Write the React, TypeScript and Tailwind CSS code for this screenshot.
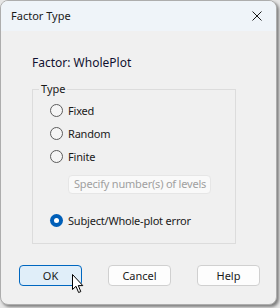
import React from 'react';

const font = { fontFamily: '"Segoe UI", "Noto Sans", sans-serif' };

function Radio({ label, checked = false }: { label: string; checked?: boolean }) {
  return (
    <div className="flex h-[23px] items-center gap-[5px] pl-[17px]">
      {checked ? (
        <span className="flex h-[13px] w-[13px] items-center justify-center rounded-full bg-[#005fb8]">
          <span className="h-[5px] w-[5px] rounded-full bg-white" />
        </span>
      ) : (
        <span className="h-[13px] w-[13px] rounded-full border border-[#5c5c5c] bg-[#f5f5f5]" />
      )}
      <span className="text-[11px] leading-[16px] tracking-[-0.2px] text-[#1a1a1a]">{label}</span>
    </div>
  );
}

function Button({ label, primary = false }: { label: string; primary?: boolean }) {
  return (
    <button
      className={`h-[21px] w-[63px] rounded-[4px] border text-[11px] leading-[16px] text-[#1a1a1a] ${
        primary ? 'border-[#0067c0] bg-[#e0eef9]' : 'border-[#d0d0d0] bg-[#fdfdfd]'
      }`}
    >
      {label}
    </button>
  );
}

export default function App() {
  return (
    <div className="relative h-[308px] w-[280px] bg-[#e6e6e6]" style={font}>
      <div className="flex h-[305px] w-[277px] flex-col overflow-hidden rounded-[8px] border border-[#adadad] bg-[#f0f0f0] shadow-[2px_2px_3px_rgba(0,0,0,0.45)]">
        {/* title bar */}
        <div className="flex h-[30px] shrink-0 items-center justify-between bg-[#eff4f9] pl-[10px] pr-[10px]">
          <span className="text-[11px] leading-[16px] text-[#1a1a1a]">Factor Type</span>
          <svg width="10" height="10" viewBox="0 0 10 10" className="mr-[4px]">
            <path d="M0.5 0.5 L9.5 9.5 M9.5 0.5 L0.5 9.5" stroke="#1a1a1a" strokeWidth="1" />
          </svg>
        </div>

        <div className="flex flex-col pt-[23px]">
          <div className="ml-[31px] text-[12px] leading-[18px] text-[#101030]">Factor: WholePlot</div>

          <fieldset className="ml-[31px] mt-[9px] w-[204px] border border-[#dcdcdc] pb-[11px]">
            <legend className="ml-[6px] px-[2px] text-[11px] leading-[16px] text-[#1a1a1a]">Type</legend>
            <div className="mt-[2px] flex flex-col">
              <Radio label="Fixed" />
              <Radio label="Random" />
              <Radio label="Finite" />
              <div className="ml-[35px] mt-[7px] flex h-[19px] w-[143px] items-center whitespace-nowrap rounded-[4px] border border-[#e6e6e6] bg-[#f9f9f9] pl-[5px] text-[11px] tracking-[-0.2px] text-[#a0a0a0]">
                Specify number(s) of levels
              </div>
              <div className="mt-[15px]">
                <Radio label="Subject/Whole-plot error" checked />
              </div>
            </div>
          </fieldset>

          <div className="ml-[18px] mt-[21px] flex gap-[26px]">
            <Button label="OK" primary />
            <Button label="Cancel" />
            <Button label="Help" />
          </div>
        </div>
      </div>

      {/* mouse pointer over OK */}
      <svg width="13" height="20" viewBox="0 0 13 20" className="absolute left-[72px] top-[274px]">
        <path
          d="M0.5 0.5 L0.5 15.5 L4 12.3 L6.6 18.5 L8.8 17.6 L6.3 11.6 L10.8 11.6 Z"
          fill="#ffffff"
          stroke="#000000"
          strokeWidth="1"
          strokeLinejoin="round"
        />
      </svg>
    </div>
  );
}
